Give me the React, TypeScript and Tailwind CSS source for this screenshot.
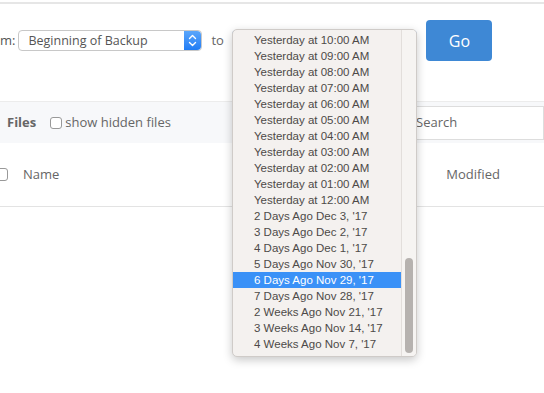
import React from "react";

const items = [
  "Yesterday at 10:00 AM",
  "Yesterday at 09:00 AM",
  "Yesterday at 08:00 AM",
  "Yesterday at 07:00 AM",
  "Yesterday at 06:00 AM",
  "Yesterday at 05:00 AM",
  "Yesterday at 04:00 AM",
  "Yesterday at 03:00 AM",
  "Yesterday at 02:00 AM",
  "Yesterday at 01:00 AM",
  "Yesterday at 12:00 AM",
  "2 Days Ago Dec 3, '17",
  "3 Days Ago Dec 2, '17",
  "4 Days Ago Dec 1, '17",
  "5 Days Ago Nov 30, '17",
  "6 Days Ago Nov 29, '17",
  "7 Days Ago Nov 28, '17",
  "2 Weeks Ago Nov 21, '17",
  "3 Weeks Ago Nov 14, '17",
  "4 Weeks Ago Nov 7, '17",
];

function Stepper() {
  return (
    <div className="w-[17px] self-stretch rounded-r-[4px] bg-gradient-to-b from-[#5aa6fb] to-[#1f7cf4] flex items-center justify-center">
      <svg width="9" height="13" viewBox="0 0 9 13" fill="none" stroke="white" strokeWidth="1.4" strokeLinecap="round" strokeLinejoin="round">
        <path d="M1.5 4.5 L4.5 1.5 L7.5 4.5" />
        <path d="M1.5 8.5 L4.5 11.5 L7.5 8.5" />
      </svg>
    </div>
  );
}

export default function App() {
  return (
    <div
      className="relative w-[544px] h-[393px] overflow-hidden bg-white text-[#666]"
      style={{ fontFamily: '"Open Sans", sans-serif' }}
    >
      <div className="mt-[2px] h-[2px] bg-[#e6e6e6]" />
      <div className="flex items-center pt-[16px] h-[57px]">
        <span className="text-[13px] text-[#555]">m:</span>
        <div className="ml-[3px] w-[184px] h-[21px] flex items-stretch border border-[#c8c8c8] rounded-[4px] bg-white">
          <span className="flex-1 pl-[9px] text-[12.5px] leading-[19px] text-[#555]">Beginning of Backup</span>
          <Stepper />
        </div>
        <span className="ml-[9px] w-[13px] text-[13px] text-[#666]">to</span>
        <div className="ml-[8px] w-[185px] h-[22px] flex items-stretch border border-[#8fb8ec] rounded-[4px] bg-white">
          <span className="flex-1" />
          <Stepper />
        </div>
        <button className="ml-[9px] w-[66px] h-[41px] rounded-[4px] bg-[#3e88d5] text-white text-[16px]">Go</button>
      </div>
      <div className="mt-[40px] h-[42px] bg-[#f7f8fa] border-t border-[#ececec] flex items-center">
        <span className="ml-[7px] text-[13px] font-bold text-[#666]">Files</span>
        <span className="ml-[14px] w-[12px] h-[12px] border border-[#999] rounded-[3px] bg-white" />
        <span className="ml-[3px] text-[13px] text-[#666]">show hidden files</span>
        <div className="ml-auto w-[141px] h-[34px] border border-[#ddd] bg-white flex items-center pl-[12px]">
          <span className="text-[13px] text-[#666]">Search</span>
        </div>
      </div>
      <div className="h-[64px] border-b border-[#e3e3e3] flex items-center">
        <span className="-ml-[5px] w-[13px] h-[13px] border border-[#999] rounded-[3px] bg-white" />
        <span className="ml-[15px] text-[13px] text-[#666]">Name</span>
        <span className="ml-auto mr-[44px] text-[13px] text-[#666]">Modified</span>
      </div>

      <div
        className="absolute left-[232px] top-[29px] w-[185px] h-[328px] rounded-[5px] bg-[#f4f1ef] border border-[#cfcbc8] shadow-[0_3px_10px_rgba(0,0,0,0.22)] flex overflow-hidden"
        style={{ fontFamily: '"Liberation Sans", Arial, sans-serif' }}
      >
        <div className="flex-1 pt-[2px]">
          {items.map((t) => {
            const sel = t.startsWith("6 Days");
            return (
              <div
                key={t}
                className={
                  "h-[16px] pl-[21px] text-[11.5px] leading-[16px] whitespace-nowrap " +
                  (sel ? "bg-[#3a91f7] text-white" : "text-[#4d4a48]")
                }
              >
                {t}
              </div>
            );
          })}
        </div>
        <div className="w-[15px] border-l border-[#e2dedb] bg-[#f6f4f2] flex flex-col justify-end items-center pb-[3px]">
          <div className="w-[8px] h-[95px] rounded-full bg-[#b6b2af]" />
        </div>
      </div>
    </div>
  );
}
